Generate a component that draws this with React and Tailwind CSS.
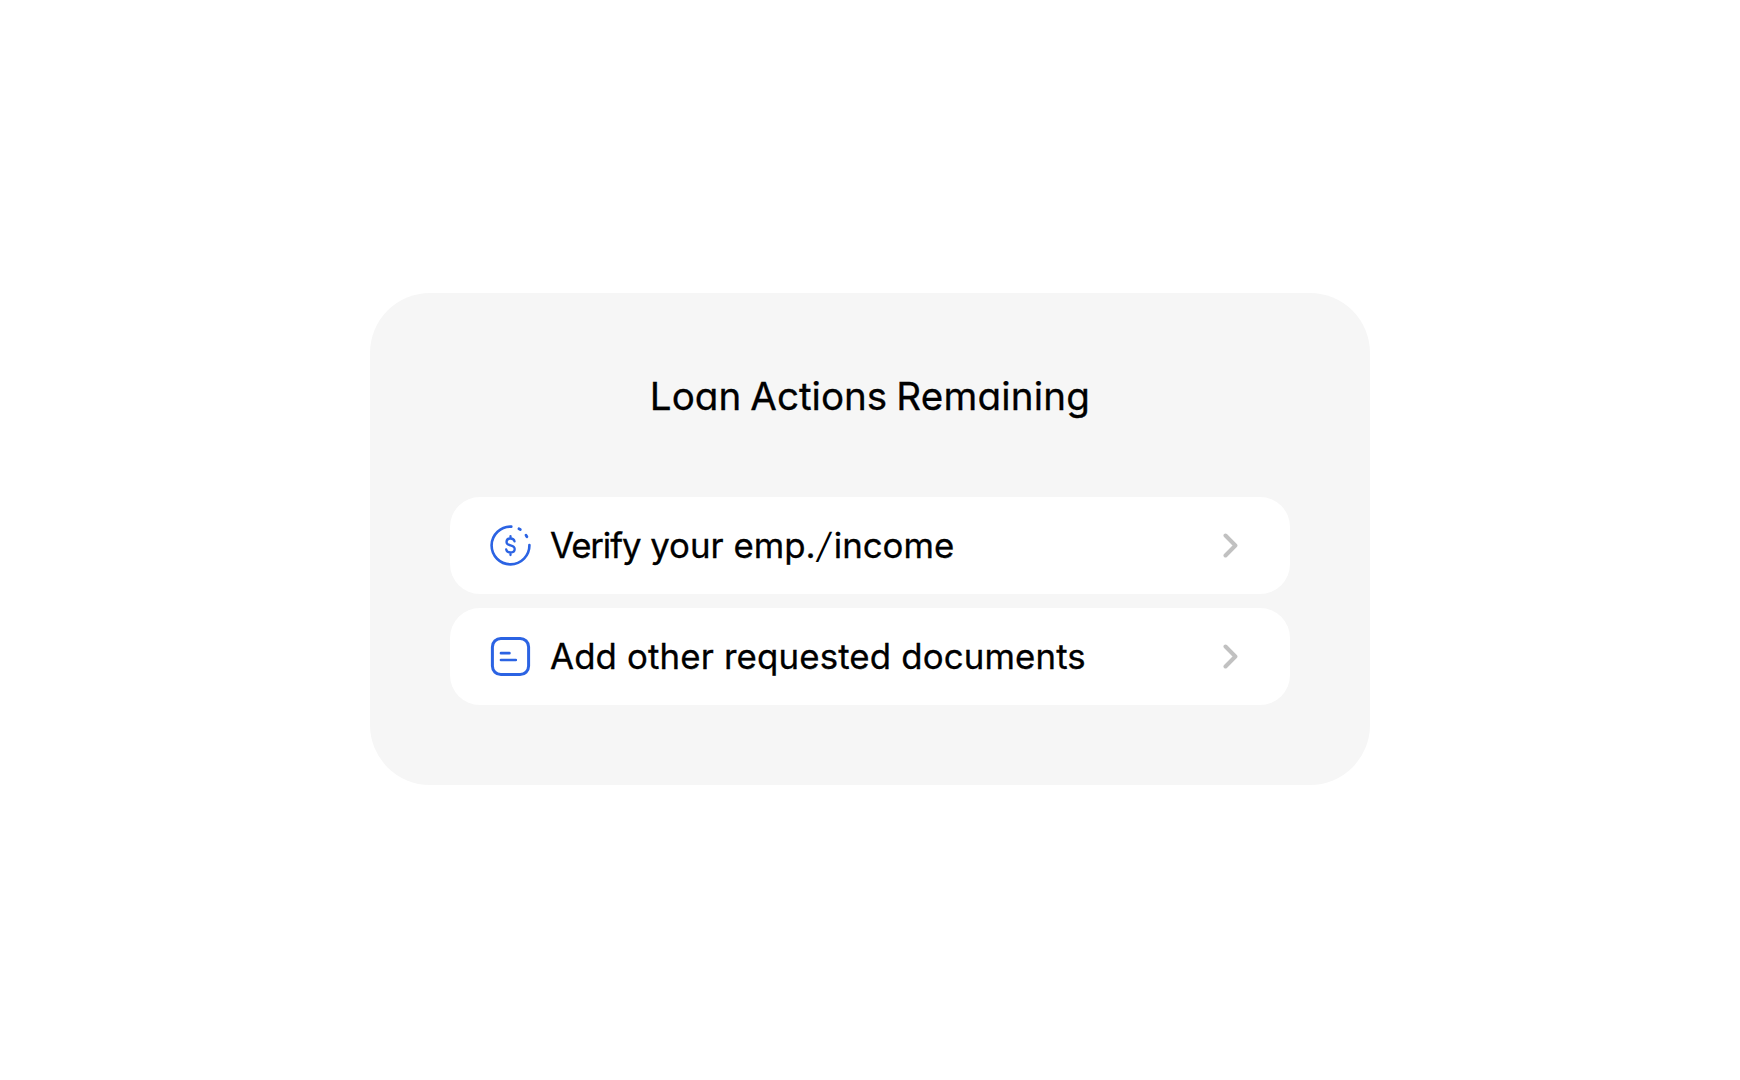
const IncomeIcon = () => (
  <svg className="w-[41px] h-[41px] shrink-0" viewBox="0 0 41 41" fill="none" stroke="#2b63e3" strokeLinecap="round" strokeLinejoin="round">
    <path d="M21.3 1.6A18.9 18.9 0 1 0 39.4 20" strokeWidth="2.6" />
    <path d="M28.9 3.8l1.4.7M36 10.3l.9 1.4" strokeWidth="2.8" />
    <path d="M24.5 16.3c-.4-1.8-1.9-2.8-4-2.8-2.4 0-4 1.3-4 3.4 0 2.3 1.9 2.9 4 3.4 2.4.6 4.2 1.3 4.2 3.7 0 2.2-1.7 3.5-4.2 3.5-2.3 0-4-1.2-4.3-3.2M20.5 11.2v2.3M20.5 27.6v2.5" strokeWidth="2.3" />
  </svg>
);

const DocumentIcon = () => (
  <svg className="w-[41px] h-[41px] shrink-0" viewBox="0 0 41 41" fill="none" stroke="#2b63e3" strokeLinecap="round" strokeWidth="3">
    <rect x="2.4" y="2.4" width="36.2" height="36.2" rx="8.5" />
    <path d="M11 17.2h8.4M11 24h14.8" strokeWidth="2.7" />
  </svg>
);

const Chevron = () => (
  <svg className="w-[16px] h-[26px] shrink-0" viewBox="0 0 16 26" fill="none" stroke="#c1c1c1" strokeWidth="4" strokeLinecap="round" strokeLinejoin="round">
    <path d="M2.5 2.5L12.4 12.5L2.5 22.5" />
  </svg>
);

const ActionRow = ({ icon, children }) => (
  <button className="flex h-[97px] w-full items-center rounded-[30px] bg-white pl-10 pr-[51px] text-left">
    {icon}
    <span className="mb-[2px] ml-[19px] flex-1 whitespace-nowrap text-[34.8px] leading-[44px]">{children}</span>
    <Chevron />
  </button>
);

const App = () => (
  <div className="flex h-[1080px] w-full justify-center bg-white pt-[293px] font-['Inter',sans-serif] font-normal text-black [-webkit-text-stroke:0.3px_#000] [font-feature-settings:'cv11']">
    <div className="flex h-[492px] w-[1000px] flex-col rounded-[60px] bg-[#f6f6f6] px-20 pb-20 pt-[79px]">
      <h1 className="mb-[77px] whitespace-nowrap text-center text-[38.6px] font-normal leading-[48px] [word-spacing:-1.8px]">
        Loan Actions <span className="tracking-[0.2px]">Remaining</span>
      </h1>
      <div className="flex flex-col gap-[14px]">
        <ActionRow icon={<IncomeIcon />}>
          <span className="tracking-[-1.1px]">Verify</span> your emp.
          <span className="ml-[2.5px] mr-[4px] inline-block origin-center scale-x-[1.7] font-extralight [-webkit-text-stroke:0]">/</span>
          income
        </ActionRow>
        <ActionRow icon={<DocumentIcon />}>
          <span className="tracking-[0.15px]">Add other requested documents</span>
        </ActionRow>
      </div>
    </div>
  </div>
);

export default App;
